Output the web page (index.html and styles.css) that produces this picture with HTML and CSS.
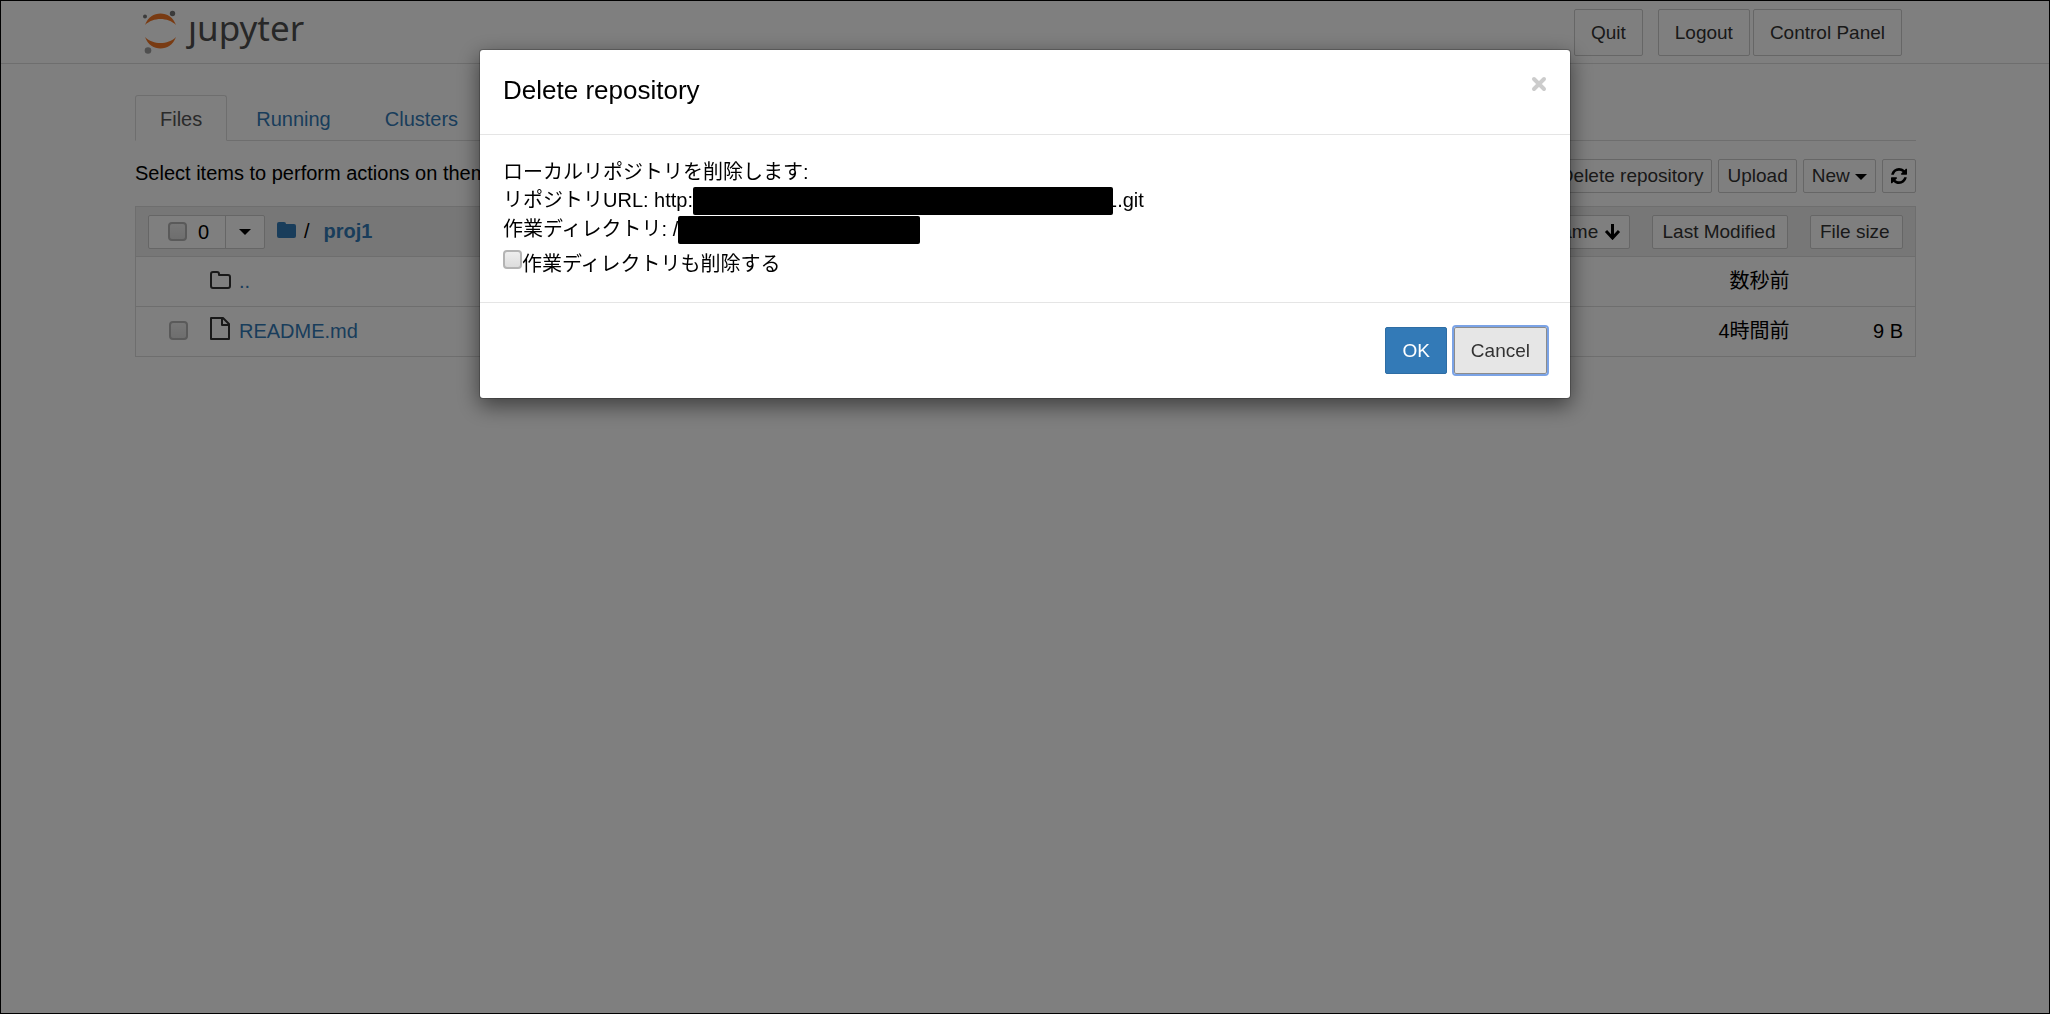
FILE: index.html
```html
<!DOCTYPE html>
<html lang="ja">
<head>
    <meta charset="UTF-8">
    <meta name="viewport" content="width=device-width, initial-scale=1.0">
    <title>Jupyter - proj1</title>
    <link rel="stylesheet" href="styles.css">
</head>
<body>
    <header class="header">
        <a href="#" class="logo">
            <svg class="logo-mark" viewBox="0 0 36 46" aria-hidden="true">
                <path class="arc" d="M3 16C6 8 12 4.500 18.500 4.500S31 8 34 16C30 12 24 10 18.500 10S7 12 3 16Z"/>
                <path class="arc" d="M3 28C6 36 12 39.500 18.500 39.500S31 36 34 28C30 32 24 34 18.500 34S7 32 3 28Z"/>
                <circle class="dot" cx="3" cy="7.500" r="2"/>
                <circle class="dot" cx="30.500" cy="4.500" r="2.700"/>
                <circle class="dot dot-light" cx="6" cy="41.500" r="3.300"/>
            </svg>
            <span>ȷupyter</span>
        </a>
        <div class="header-buttons">
            <button type="button" class="btn quit">Quit</button>
            <button type="button" class="btn">Logout</button>
            <button type="button" class="btn">Control Panel</button>
        </div>
    </header>

    <main class="container">
        <nav class="tabs">
            <a href="#" class="tab active">Files</a>
            <a href="#" class="tab">Running</a>
            <a href="#" class="tab">Clusters</a>
        </nav>

        <div class="toolbar">
            <span>Select items to perform actions on them.</span>
            <div class="toolbar-buttons">
                <button type="button" class="btn btn-sm">Delete repository</button>
                <button type="button" class="btn btn-sm">Upload</button>
                <button type="button" class="btn btn-sm">New <i class="caret"></i></button>
                <button type="button" class="btn btn-sm" aria-label="Refresh">
                    <svg class="icon-refresh" viewBox="0 0 1536 1536" aria-hidden="true"><path d="M1511 928q0 5-1 7-64 268-268 434.500T764 1536q-146 0-282.500-55T238 1324l-129 129q-19 19-45 19t-45-19-19-45V960q0-26 19-45t45-19h448q26 0 45 19t19 45-19 45l-137 137q71 66 161 102t187 36q134 0 250-65t186-179q11-17 53-117 8-23 30-23h192q13 0 22.500 9.500t9.500 22.500zm25-800v448q0 26-19 45t-45 19h-448q-26 0-45-19t-19-45 19-45l138-138Q969 256 768 256q-134 0-250 65T332 500q-11 17-53 117-8 23-30 23H50q-13 0-22.500-9.500T18 608v-7q65-268 270-434.500T768 0q146 0 284 55.500T1297 212l130-129q19-19 45-19t45 19 19 45z"/></svg>
                </button>
            </div>
        </div>

        <table class="files">
            <thead>
                <tr>
                    <th>
                        <div class="list-header">
                            <div class="select-group">
                                <label class="select-all"><input type="checkbox" class="check"> 0</label>
                                <button type="button" class="select-menu" aria-label="Select menu"><i class="caret"></i></button>
                            </div>
                            <div class="breadcrumb">
                                <a href="#" aria-label="Home"><svg class="icon-home" viewBox="0 0 20 17" aria-hidden="true"><path d="M2 0H7Q9 0 9 2H17Q19 2 19 4V14Q19 16 17 16H2Q0 16 0 14V2Q0 0 2 0Z"/></svg></a>
                                <span>/</span>
                                <a href="#" class="current">proj1</a>
                            </div>
                            <button type="button" class="btn btn-sm sort-name">Name
                                <svg class="icon-arrow" viewBox="0 0 17 17" aria-hidden="true"><path d="M8.500 1V15M2 8L8.500 15L15 8"/></svg>
                            </button>
                        </div>
                    </th>
                    <th class="modified"><button type="button" class="btn btn-sm btn-modified">Last Modified</button></th>
                    <th class="size"><button type="button" class="btn btn-sm btn-size">File size</button></th>
                </tr>
            </thead>
            <tbody>
                <tr>
                    <td>
                        <div class="item parent">
                            <svg class="icon-item" viewBox="0 0 22 24" aria-hidden="true"><path d="M3 3H7Q9 3 9 5V6H18Q20 6 20 8V17Q20 19 18 19H3Q1 19 1 17V5Q1 3 3 3Z"/></svg>
                            <a href="#">..</a>
                        </div>
                    </td>
                    <td class="modified">数秒前</td>
                    <td class="size"></td>
                </tr>
                <tr>
                    <td>
                        <div class="item">
                            <input type="checkbox" class="check" aria-label="README.md">
                            <svg class="icon-item icon-file" viewBox="0 0 22 24" aria-hidden="true"><path d="M1 1H13L19 7V22H1ZM12 1V8H19"/></svg>
                            <a href="#">README.md</a>
                        </div>
                    </td>
                    <td class="modified">4時間前</td>
                    <td class="size">9 B</td>
                </tr>
            </tbody>
        </table>
    </main>

    <div class="backdrop">
        <div class="modal" role="dialog" aria-labelledby="modal-title">
            <div class="modal-header">
                <h4 id="modal-title">Delete repository</h4>
                <button type="button" class="close" aria-label="Close">
                    <svg viewBox="0 0 16 16" aria-hidden="true"><path d="M3 3L13 13M13 3L3 13"/></svg>
                </button>
            </div>
            <div class="modal-body">
                <div>ローカルリポジトリを削除します:</div>
                <div class="line">リポジトリURL: http:<span class="mask mask-url"></span>1.git</div>
                <div class="line">作業ディレクトリ: /<span class="mask mask-dir"></span></div>
                <label class="delete-dir"><input type="checkbox" class="check"><span>作業ディレクトリも削除する</span></label>
            </div>
            <div class="modal-footer">
                <button type="button" class="btn btn-primary">OK</button>
                <button type="button" class="btn btn-focus">Cancel</button>
            </div>
        </div>
    </div>
</body>
</html>
```
FILE: styles.css
```css
* {
    box-sizing: border-box;
}
body {
    margin: 0;
    background: #fff;
    color: #000;
    font-family: "Liberation Sans", Arial, "Noto Sans CJK JP", sans-serif;
    font-size: 20px;
    line-height: 28px;
}
a {
    color: #337ab7;
    text-decoration: none;
}

/* buttons */
.btn {
    height: 47px;
    padding: 0 16px;
    border: 1px solid #ccc;
    border-radius: 2px;
    background: #fff;
    color: #333;
    font-family: inherit;
    font-size: 19px;
    line-height: 28px;
    white-space: nowrap;
}
.btn-sm {
    height: 34px;
    padding: 0 8px;
}
.caret {
    display: inline-block;
    border-top: 6px solid #000;
    border-left: 6px solid transparent;
    border-right: 6px solid transparent;
    vertical-align: middle;
}
.check {
    appearance: none;
    flex: none;
    width: 19px;
    height: 19px;
    margin: 0;
    border: 2px solid #b4b4b4;
    border-radius: 4px;
    background: linear-gradient(#eee, #ddd);
}

/* header */
.header {
    display: flex;
    justify-content: space-between;
    align-items: flex-start;
    height: 64px;
    padding: 9px 148px 0 142px;
    border-bottom: 1px solid #ddd;
}
.logo {
    display: flex;
    gap: 10px;
    color: #4e4e4e;
    font-family: "Noto Sans", sans-serif;
    font-size: 35px;
    line-height: 38px;
}
.logo-mark {
    width: 36px;
    height: 46px;
}
.arc {
    fill: #f37726;
}
.dot {
    fill: #767677;
}
.dot-light {
    fill: #9e9e9e;
}
.header-buttons {
    display: flex;
    gap: 3px;
}
.quit {
    margin-right: 12px;
}

/* file browser */
.container {
    padding: 31px 134px 0 135px;
}
.tabs {
    display: flex;
    gap: 4px;
    border-bottom: 1px solid #ddd;
}
.tab {
    height: 46px;
    margin-bottom: -1px;
    padding: 9px 24px;
    border: 1px solid transparent;
}
.tab.active {
    border-color: #ddd #ddd #fff;
    border-radius: 3px 3px 0 0;
    background: #fff;
    color: #555;
}
.toolbar {
    display: flex;
    justify-content: space-between;
    margin-top: 18px;
}
.toolbar-buttons {
    display: flex;
    gap: 6px;
}
.icon-refresh {
    display: block;
    width: 16px;
    height: 16px;
}
.files {
    width: 100%;
    margin-top: 13px;
    border: 1px solid #ddd;
    border-collapse: collapse;
}
.files th,
.files td {
    height: 50px;
    padding: 0 12px;
    border-bottom: 1px solid #ddd;
    font-weight: normal;
    text-align: left;
}
.files td {
    padding-bottom: 2px;
}
.files th {
    background: #eee;
}
.files .modified {
    width: 160px;
    padding-left: 8px;
    padding-right: 0;
    text-align: right;
}
.files .size {
    width: 126px;
    text-align: right;
}
.btn-modified {
    width: 136px;
    padding-left: 10px;
    margin-right: 2px;
    text-align: left;
}
.btn-size {
    width: 93px;
    padding-left: 9px;
    text-align: left;
}
.list-header {
    display: flex;
    align-items: center;
}
.select-group {
    display: flex;
    height: 34px;
    border: 1px solid #ccc;
    border-radius: 2px;
    background: #fff;
}
.select-all {
    display: flex;
    align-items: center;
    gap: 11px;
    width: 76px;
    padding-left: 19px;
}
.select-menu {
    width: 39px;
    padding: 0;
    border: 0;
    border-left: 1px solid #ccc;
    background: none;
}
.breadcrumb {
    display: flex;
    align-items: center;
    gap: 7px;
    margin-left: 12px;
    padding-bottom: 2px;
}
.breadcrumb .current {
    margin-left: 7px;
    font-weight: bold;
}
.icon-home {
    display: block;
    width: 20px;
    height: 17px;
    fill: #337ab7;
}
.sort-name {
    margin-left: auto;
    margin-right: -12px;
}
.icon-arrow {
    width: 17px;
    height: 17px;
    fill: none;
    stroke: #000;
    stroke-width: 3;
    vertical-align: -2px;
}
.item {
    display: flex;
    align-items: center;
    padding-left: 21px;
}
.parent {
    padding-left: 40px;
}
.icon-item {
    width: 22px;
    height: 24px;
    margin: 0 7px 0 22px;
    fill: none;
    stroke: #333;
    stroke-width: 2;
    stroke-linejoin: round;
}
.icon-file {
    margin-bottom: 4px;
}

/* dialog */
.backdrop {
    position: fixed;
    inset: 0;
    padding: 48px 20px;
    border: 1px solid #000;
    background: rgba(0, 0, 0, 0.5);
}
.modal {
    max-width: 1092px;
    margin: 0 auto;
    border: 1px solid rgba(0, 0, 0, 0.2);
    border-radius: 4px;
    background: #fff;
    background-clip: padding-box;
    box-shadow: 0 7px 21px rgba(0, 0, 0, 0.5);
}
.modal-header {
    display: flex;
    justify-content: space-between;
    align-items: flex-start;
    height: 85px;
    padding: 21px 23px;
    border-bottom: 1px solid #e5e5e5;
}
.modal-header h4 {
    margin: 0;
    font-size: 26px;
    font-weight: normal;
    line-height: 38px;
}
.close {
    padding: 5px 0;
    border: 0;
    background: none;
}
.close svg {
    display: block;
    width: 16px;
    height: 16px;
    stroke: #ccc;
    stroke-width: 4;
    stroke-linecap: round;
}
.modal-body {
    padding: 23px;
}
.line {
    display: flex;
}
.mask {
    height: 28px;
    margin-top: 1px;
    border-radius: 2px;
    background: #000;
}
.mask-url {
    width: 420px;
    margin-right: -7px;
}
.mask-dir {
    width: 242px;
}
.line + .line {
    height: 28px;
}
.delete-dir {
    display: flex;
    align-items: flex-start;
    height: 36px;
    padding-top: 7px;
}
.modal-footer {
    display: flex;
    justify-content: flex-end;
    gap: 7px;
    padding: 24px 23px;
    border-top: 1px solid #e5e5e5;
}
.btn-primary {
    border-color: #2e6da4;
    background: #337ab7;
    color: #fff;
}
.btn-focus {
    border-color: #8c8c8c;
    background: #e6e6e6;
    outline: 2px solid #7ba3e6;
}
```
